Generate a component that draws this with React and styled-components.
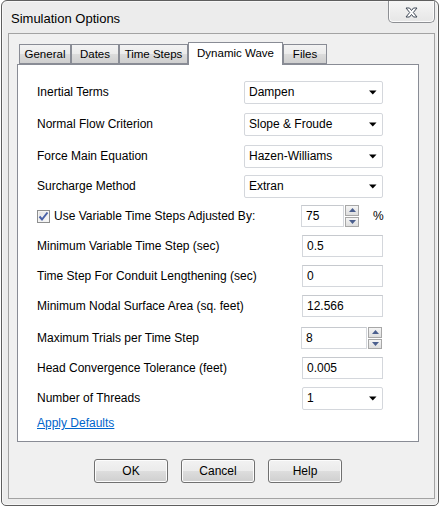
import React, { useState } from "react";
import styled, { createGlobalStyle } from "styled-components";

const tabs = [
  { name: "General", width: 52 },
  { name: "Dates", width: 48 },
  { name: "Time Steps", width: 69 },
  { name: "Dynamic Wave", width: 95 },
  { name: "Files", width: 44 },
];

const Arrow = () => (
  <svg width="8" height="5" viewBox="0 0 8 5">
    <path d="M0 0.5 H7.5 L3.75 4.5 Z" fill="#000" />
  </svg>
);

const Spinner = () => (
  <SpinButtons>
    <SpinHalf>
      <svg width="7" height="4" viewBox="0 0 7 4">
        <path d="M0 4 L3.5 0 L7 4 Z" fill="#4b5f8e" />
      </svg>
    </SpinHalf>
    <SpinHalf>
      <svg width="7" height="4" viewBox="0 0 7 4">
        <path d="M0 0 L3.5 4 L7 0 Z" fill="#4b5f8e" />
      </svg>
    </SpinHalf>
  </SpinButtons>
);

const Select = ({ value, wide }) => (
  <Combo $wide={wide}>
    <span>{value}</span>
    <Arrow />
  </Combo>
);

const App = () => {
  const [active, setActive] = useState("Dynamic Wave");
  const [checked, setChecked] = useState(true);

  return (
    <>
      <GlobalStyle />
      <Window>
        <TitleBar>
          <Title>Simulation Options</Title>
          <CloseButton>
            <svg width="13" height="11" viewBox="0 0 13 11">
              <path
                d="M1 1 H4.5 L6.5 3.5 L8.5 1 H12 L8.3 5.5 L12 10 H8.5 L6.5 7.5 L4.5 10 H1 L4.7 5.5 Z"
                fill="#ffffff"
                stroke="#3f4856"
                strokeWidth="1"
                strokeLinejoin="round"
              />
            </svg>
          </CloseButton>
        </TitleBar>
        <Client>
          <TabStrip>
            {tabs.map((t) => (
              <Tab
                key={t.name}
                $width={t.width}
                $active={active === t.name}
                onClick={() => setActive(t.name)}
              >
                {t.name}
              </Tab>
            ))}
          </TabStrip>
          <TabPage>
            <Row>
              <Label>Inertial Terms</Label>
              <Select value="Dampen" wide />
            </Row>
            <Row $loose>
              <Label>Normal Flow Criterion</Label>
              <Select value="Slope & Froude" wide />
            </Row>
            <Row $loose>
              <Label>Force Main Equation</Label>
              <Select value="Hazen-Williams" wide />
            </Row>
            <Row>
              <Label>Surcharge Method</Label>
              <Select value="Extran" wide />
            </Row>
            <Row>
              <CheckLabel onClick={() => setChecked(!checked)}>
                <CheckBox>
                  {checked && (
                    <svg width="11" height="11" viewBox="0 0 11 11">
                      <path
                        d="M1.5 5.5 L4 8.5 L9.5 1.5"
                        fill="none"
                        stroke="#4a62a8"
                        strokeWidth="2"
                      />
                    </svg>
                  )}
                </CheckBox>
                Use Variable Time Steps Adjusted By:
              </CheckLabel>
              <Controls>
                <Field $width={43}>75</Field>
                <Spinner />
                <Unit>%</Unit>
              </Controls>
            </Row>
            <Row>
              <Label>Minimum Variable Time Step (sec)</Label>
              <Field $width={81}>0.5</Field>
            </Row>
            <Row>
              <Label>Time Step For Conduit Lengthening (sec)</Label>
              <Field $width={81}>0</Field>
            </Row>
            <Row>
              <Label>Minimum Nodal Surface Area (sq. feet)</Label>
              <Field $width={81}>12.566</Field>
            </Row>
            <Row $loose>
              <Label>Maximum Trials per Time Step</Label>
              <Controls>
                <Field $width={66}>8</Field>
                <Spinner />
                <Spacer />
              </Controls>
            </Row>
            <Row>
              <Label>Head Convergence Tolerance (feet)</Label>
              <Field $width={81}>0.005</Field>
            </Row>
            <Row>
              <Label>Number of Threads</Label>
              <Select value="1" />
            </Row>
            <Link href="#">Apply Defaults</Link>
          </TabPage>
          <ButtonRow>
            <Button>OK</Button>
            <Button>Cancel</Button>
            <Button>Help</Button>
          </ButtonRow>
        </Client>
      </Window>
    </>
  );
};

const GlobalStyle = createGlobalStyle`
  html, body {
    margin: 0;
    padding: 0;
    background: #ffffff;
  }
  * {
    box-sizing: border-box;
  }
`;

const Window = styled.div`
  width: 438px;
  height: 506px;
  margin-left: 1px;
  display: flex;
  flex-direction: column;
  background: #ececec;
  border: 1px solid #5e5e5e;
  border-radius: 6px 6px 5px 5px;
  box-shadow: inset 0 0 0 1px #f7f7f7;
  font-family: "Liberation Sans", Arial, sans-serif;
  font-size: 12px;
  color: #000;
  overflow: hidden;
`;

const TitleBar = styled.div`
  height: 32px;
  display: flex;
  justify-content: space-between;
  align-items: flex-start;
`;

const Title = styled.div`
  font-size: 13px;
  padding: 10px 0 0 9px;
  color: #000;
`;

const CloseButton = styled.div`
  width: 47px;
  height: 23px;
  margin: -1px 3px 0 0;
  display: flex;
  align-items: center;
  justify-content: center;
  padding-top: 2px;
  border: 1px solid #8d8f93;
  border-top: none;
  border-radius: 0 0 5px 5px;
  background: linear-gradient(#f6f6f6, #e6e6e6);
  box-shadow: inset 0 0 0 1px #fbfbfb;
`;

const Client = styled.div`
  flex: 1;
  margin: 0 3px 6px 6px;
  padding: 8px 14px 0 8px;
  background: #f0f0f0;
  border: 1px solid #a3a3a3;
  display: flex;
  flex-direction: column;
`;

const TabStrip = styled.div`
  height: 22px;
  display: flex;
  align-items: flex-end;
  padding-left: 2px;
  position: relative;
  z-index: 1;
`;

const Tab = styled.div`
  width: ${(p) => p.$width}px;
  height: ${(p) => (p.$active ? 23 : 20)}px;
  margin-bottom: ${(p) => (p.$active ? -1 : 0)}px;
  display: flex;
  align-items: center;
  justify-content: center;
  padding-bottom: ${(p) => (p.$active ? 3 : 0)}px;
  font-size: 11.5px;
  border: 1px solid #898c95;
  border-bottom: ${(p) => (p.$active ? "none" : "1px solid #898c95")};
  background: ${(p) =>
    p.$active ? "#ffffff" : "linear-gradient(#f3f3f3 0%, #ebebeb 50%, #dcdcdc 51%, #cfcfcf 100%)"};
  cursor: default;
`;

const TabPage = styled.div`
  width: 402px;
  height: 378px;
  background: #ffffff;
  border: 1px solid #898c95;
  padding: 15px 35px 0 19px;
  display: flex;
  flex-direction: column;
  gap: 6px;
`;

const Row = styled.div`
  height: 24px;
  display: flex;
  align-items: center;
  justify-content: space-between;
  margin-top: ${(p) => (p.$loose ? 2 : 0)}px;
  &:first-child {
    margin-top: 0;
  }
`;

const Label = styled.span`
  white-space: nowrap;
`;

const CheckLabel = styled.label`
  display: flex;
  align-items: center;
  gap: 4px;
  white-space: nowrap;
`;

const CheckBox = styled.span`
  width: 13px;
  height: 13px;
  display: flex;
  align-items: center;
  justify-content: center;
  border: 1px solid #8e8f8f;
  background: linear-gradient(135deg, #e2e2e2, #fbfbfb);
  box-shadow: inset 0 0 0 1px #f4f4f4;
`;

const Combo = styled.div`
  width: ${(p) => (p.$wide ? 139 : 81)}px;
  height: 23px;
  display: flex;
  align-items: center;
  justify-content: space-between;
  padding: 0 5px 0 4px;
  border: 1px solid #d4d7dc;
  border-radius: 2px;
  background: #ffffff;
`;

const Controls = styled.div`
  display: flex;
  align-items: center;
`;

const Field = styled.div`
  width: ${(p) => p.$width}px;
  height: 22px;
  display: flex;
  align-items: center;
  padding-left: 4px;
  border: 1px solid #d4d7dc;
  border-top-color: #c6c9ce;
  background: #ffffff;
`;

const SpinButtons = styled.div`
  width: 14px;
  height: 22px;
  margin-left: 1px;
  display: flex;
  flex-direction: column;
  gap: 1px;
`;

const SpinHalf = styled.div`
  flex: 1;
  display: flex;
  align-items: center;
  justify-content: center;
  border: 1px solid #a7a7a7;
  background: linear-gradient(#f5f5f5, #dedede);
`;

const Unit = styled.span`
  margin-left: 14px;
  width: 10px;
`;

const Spacer = styled.span`
  width: 1px;
`;

const Link = styled.a`
  align-self: flex-start;
  line-height: 14px;
  color: #0066cc;
  text-decoration: underline;
`;

const ButtonRow = styled.div`
  width: 402px;
  display: flex;
  justify-content: center;
  gap: 13px;
  margin-top: 17px;
`;

const Button = styled.button`
  width: 74px;
  height: 24px;
  font-family: "Liberation Sans", Arial, sans-serif;
  font-size: 12px;
  color: #000;
  border: 1px solid #707070;
  border-radius: 3px;
  background: linear-gradient(#f2f2f2 0%, #ebebeb 50%, #dddddd 51%, #cfcfcf 100%);
  box-shadow: inset 0 0 0 1px #fcfcfc;
  padding: 0;
`;

export default App;
